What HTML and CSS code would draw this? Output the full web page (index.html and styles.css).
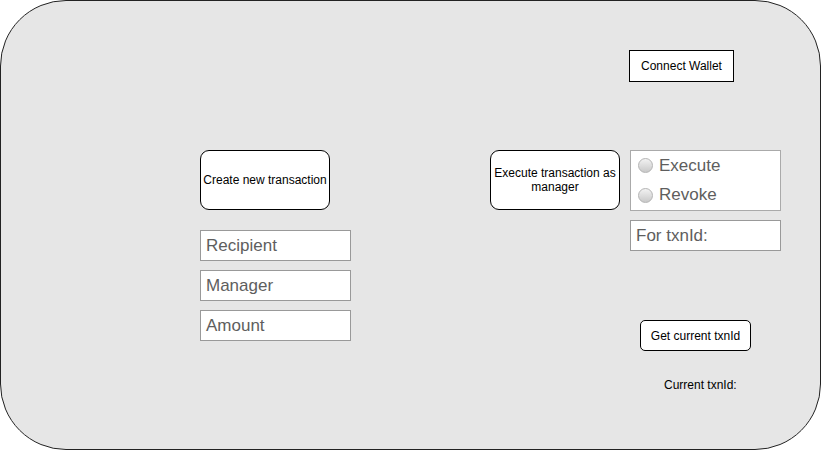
FILE: index.html
```html
<!DOCTYPE html>
<html lang="en">
<head>
  <meta charset="UTF-8">
  <meta name="viewport" content="width=device-width, initial-scale=1.0">
  <title>Multisig wallet</title>
  <link rel="stylesheet" href="styles.css">
</head>
<body>
  <!-- Main board -->
  <div class="board">
    <!-- Left column: new transaction -->
    <div class="col col-create">
      <button class="btn btn-big">Create new transaction</button>
      <div class="fields">
        <div class="field">Recipient</div>
        <div class="field">Manager</div>
        <div class="field">Amount</div>
      </div>
    </div>

    <!-- Middle column: execute as manager -->
    <div class="col col-exec">
      <button class="btn btn-big">Execute transaction as<br>manager</button>
    </div>

    <!-- Right column -->
    <div class="col col-right">
      <button class="btn btn-wallet">Connect Wallet</button>
      <div class="radio-box">
        <label class="radio"><span class="dot"></span>Execute</label>
        <label class="radio"><span class="dot"></span>Revoke</label>
      </div>
      <div class="field field-wide">For txnId:</div>
      <button class="btn btn-small">Get current txnId</button>
      <div class="current">Current txnId:</div>
    </div>
  </div>
</body>
</html>
```

FILE: styles.css
```css
/* Base */
* {
  box-sizing: border-box;
}

body {
  margin: 0;
  padding: 0;
  background-color: white;
  font-family: "Liberation Sans", Arial, sans-serif;
}

/* Rounded board */
.board {
  width: 821px;
  height: 450px;
  background-color: #e6e6e6;
  border: 1px solid #222;
  border-radius: 66px;
  display: flex;
  padding: 49px 0 0 199px;
}

.col {
  display: flex;
  flex-direction: column;
}

.col-create {
  margin-top: 100px;
  width: 150px;
}

.col-exec {
  margin-top: 100px;
  margin-left: 140px;
}

.col-right {
  margin-left: 10px;
  width: 150px;
}

/* Buttons */
.btn {
  font-family: inherit;
  font-size: 12px;
  color: black;
  background-color: white;
  border: 1px solid black;
  padding: 0;
  line-height: 14px;
  text-align: center;
}

.btn-big {
  width: 130px;
  height: 60px;
  border-radius: 9px;
}

.btn-wallet {
  width: 105px;
  height: 32px;
  margin-left: -1px;
  border-radius: 0;
}

.btn-small {
  width: 111px;
  height: 31px;
  margin: 69px 0 0 10px;
  border-radius: 5px;
}

/* Inputs */
.fields {
  display: flex;
  flex-direction: column;
  gap: 9px;
  margin-top: 20px;
}

.field {
  width: 151px;
  height: 31px;
  background-color: white;
  border: 1px solid #999;
  color: #5e5e5e;
  font-size: 17px;
  padding-left: 5px;
  display: flex;
  align-items: center;
}

.field-wide {
  margin-top: 9px;
}

/* Radio group */
.radio-box {
  width: 151px;
  height: 61px;
  margin-top: 68px;
  background-color: white;
  border: 1px solid #aaa;
  display: flex;
  flex-direction: column;
  justify-content: space-around;
  padding: 0 0 0 7px;
}

.radio {
  display: flex;
  align-items: center;
  gap: 6px;
  color: #5e5e5e;
  font-size: 17px;
}

.dot {
  width: 15px;
  height: 15px;
  border-radius: 50%;
  border: 1px solid #b4b4b4;
  background: linear-gradient(#f2f2f2, #c9c9c9);
}

.current {
  margin: 27px 0 0 34px;
  font-size: 12px;
  color: black;
}
```
